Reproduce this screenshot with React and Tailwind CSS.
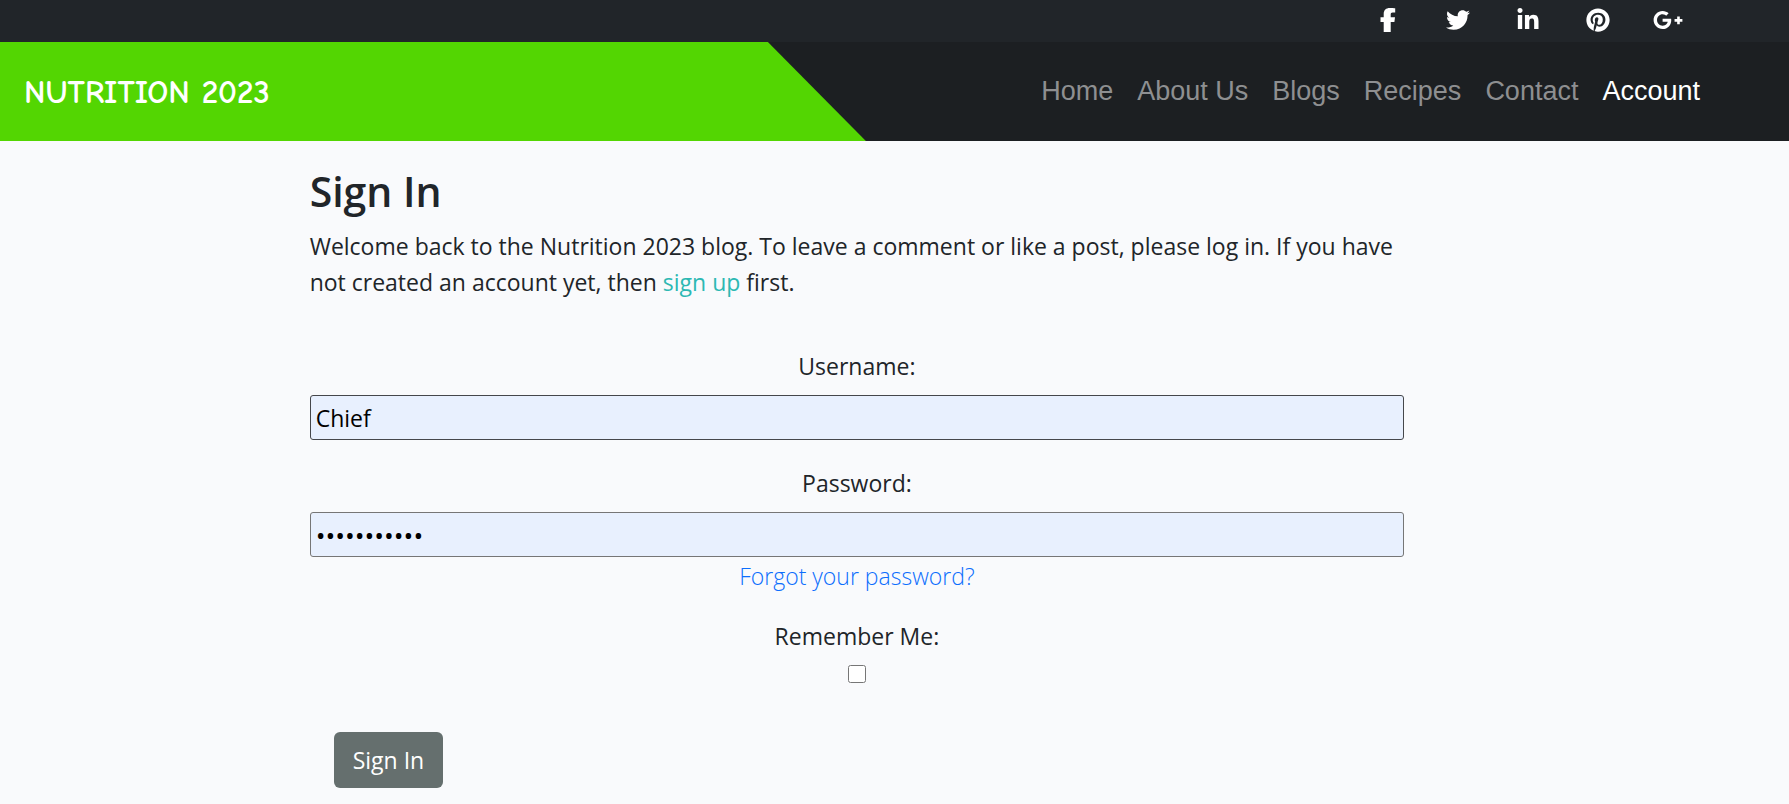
import { FaTwitter, FaLinkedinIn, FaPinterest, FaGooglePlusG } from "react-icons/fa6";

function FacebookIcon({ className }) {
  return (
    <svg viewBox="0 0 15 24" fill="currentColor" className={className} aria-hidden="true">
      <path d="M3.2 24V13.9H0V9.2H3.2V6C3.2 2 5.6 0 9.2 0C11.4 0 13.4.1 14.7.3V4.5H12.2C10.6 4.500 10.200 5.300 10.200 6.500V9.200H14.500L13.900 13.900H10.200V24Z" />
    </svg>
  );
}

const socials = [
  { label: "Facebook", Icon: FacebookIcon },
  { label: "Twitter", Icon: FaTwitter },
  { label: "LinkedIn", Icon: FaLinkedinIn },
  { label: "Pinterest", Icon: FaPinterest },
  { label: "Google Plus", Icon: FaGooglePlusG },
];

const links = ["Home", "About Us", "Blogs", "Recipes", "Contact", "Account"];

function TopBar() {
  return (
    <div className="flex h-[42px] items-start justify-end bg-[#212529] pt-2 pr-[86px]">
      {socials.map(({ label, Icon }) => (
        <a key={label} href="#" aria-label={label} className="flex w-[70px] justify-center text-white">
          <Icon className="h-6 w-[30px]" />
        </a>
      ))}
    </div>
  );
}

function NavBar() {
  return (
    <header className="flex h-[99px] items-center justify-between bg-[#1c1f22]">
      <div className="flex h-full w-[48.4%] items-center bg-[#53d602] pl-6 [clip-path:polygon(0_0,calc(100%_-_98px)_0,100%_100%,0_100%)]">
        <a
          href="#"
          className="font-['Comic_Sans_MS','Comic_Neue',Lato,sans-serif] text-[33px] font-bold whitespace-nowrap text-white"
        >
          NUTRITION 2023
        </a>
      </div>
      <nav className="flex gap-6 pr-[89px] pb-[2px] font-['Liberation_Sans',Arial,sans-serif] text-[27px] leading-10 whitespace-nowrap">
        {links.map((name) => (
          <a key={name} href="#" className={name === "Account" ? "text-white" : "text-[#8e8f91]"}>
            {name}
          </a>
        ))}
      </nav>
    </header>
  );
}

export default function App() {
  return (
    <div className="min-h-screen bg-[#f9fafc] font-['Open_Sans','Noto_Sans',sans-serif] text-[23px] leading-9 text-[#212529]">
      <TopBar />
      <NavBar />
      <main className="w-[95.8%] pb-4">
        <div className="mx-auto w-2/3 px-6 pt-[25px]">
          <h1 className="mb-3 text-[41px] leading-[50px] font-semibold">Sign In</h1>
          <p>
            Welcome back to the Nutrition 2023 blog. To leave a comment or like a post, please log in. If you have not
            created an account yet, then{" "}
            <a href="#" className="text-[#2db8b3]">
              sign up
            </a>{" "}
            first.
          </p>
          <form className="mt-12 text-center" onSubmit={(e) => e.preventDefault()}>
            <div className="mb-[25px] flex flex-col gap-[11px]">
              <label htmlFor="username">Username:</label>
              <input
                id="username"
                type="text"
                defaultValue="Chief"
                className="h-[45px] w-full rounded-[3px] border border-[#45474b] bg-[#e8f0fe] px-[5px] text-black"
              />
            </div>
            <div className="mb-px flex flex-col gap-[11px]">
              <label htmlFor="password">Password:</label>
              <input
                id="password"
                type="password"
                defaultValue="nutrition23"
                className="h-[45px] w-full rounded-[3px] border border-[#767676] bg-[#e8f0fe] px-[5px] text-[26px] text-black"
              />
            </div>
            <a href="#" className="font-light text-[#0d6efd]">
              Forgot your password?
            </a>
            <div className="mt-6 flex flex-col items-center gap-[11px]">
              <label htmlFor="remember">Remember Me:</label>
              <input id="remember" type="checkbox" className="size-[18px]" />
            </div>
            <div className="mt-[49px] flex px-6">
              <button type="submit" className="h-14 rounded-md bg-[#656f6e] px-[19px] text-white">
                Sign In
              </button>
            </div>
          </form>
        </div>
      </main>
    </div>
  );
}
